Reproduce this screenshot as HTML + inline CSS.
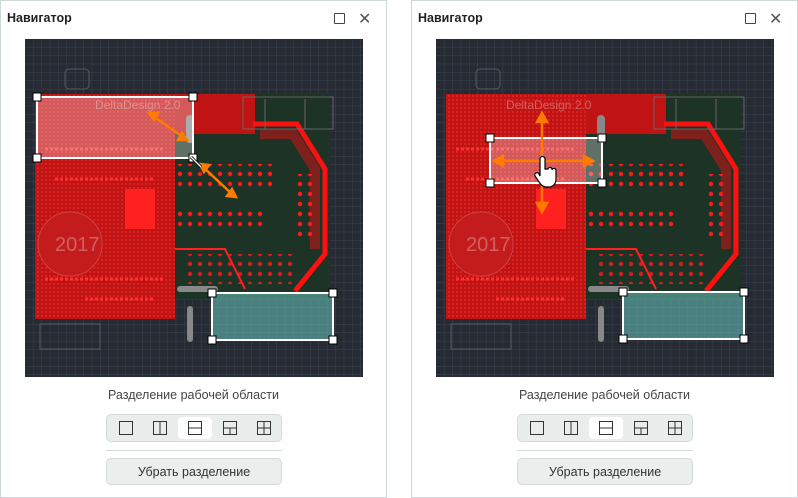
<!DOCTYPE html>
<html><head><meta charset="utf-8"><style>
*{box-sizing:border-box;margin:0;padding:0}
body{width:798px;height:498px;background:#fff;font-family:"Liberation Sans","DejaVu Sans",sans-serif;position:relative;overflow:hidden}
.p{position:absolute;top:0;width:387px;height:498px;border:1px solid #cfd8d8;background:#fff}
.t{position:absolute;left:6px;top:10px;font-size:12.5px;font-weight:bold;color:#222}
.sq{position:absolute;left:333px;top:12px;width:11px;height:11px;border:1.3px solid #444;border-radius:1px}
.x{position:absolute;left:357px;top:8px;font-size:16px;color:#555}
.cv{position:absolute;left:24px;top:38px;width:338px;height:338px}
.lb{position:absolute;left:0;width:100%;top:387px;text-align:center;font-size:12.5px;color:#444}
.seg{position:absolute;left:105px;top:413px;width:176px;height:28px;background:#e9edec;border:1px solid #d3dada;border-radius:5px}
.seg div{position:absolute;top:2px;width:34px;height:22px;border-radius:4px}
.ic{position:absolute;left:10px;top:4px;width:14px;height:14px;border:1.2px solid #333}
.hr{position:absolute;left:105px;top:449px;width:176px;height:1px;background:#d3d9d9}
.btn{position:absolute;left:105px;top:457px;width:176px;height:27px;background:#eceeed;border:1px solid #d3dada;border-radius:5px;text-align:center;line-height:26px;font-size:12.5px;color:#333}
</style></head><body>
<svg width="0" height="0" style="position:absolute">
<defs>
<pattern id="g" width="8.4" height="8.4" patternUnits="userSpaceOnUse"><path d="M8.4 0V8.4H0" fill="none" stroke="#3a4250" stroke-width="1"/></pattern>
<pattern id="d" width="10" height="10" patternUnits="userSpaceOnUse"><circle cx="5" cy="5" r="2.2" fill="#ff1a1a"/></pattern>
<pattern id="s" width="4" height="4" patternUnits="userSpaceOnUse"><rect width="2" height="2" fill="#ff3030"/></pattern>
<symbol id="b" viewBox="0 0 338 338">
<rect width="338" height="338" fill="#252a33"/>
<rect width="338" height="338" fill="url(#g)"/>
<rect x="40" y="30" width="24" height="20" rx="4" fill="none" stroke="#555c66"/>
<rect x="150" y="55" width="155" height="205" fill="#1d3326"/>
<path d="M10 55H230V95H150V280H10Z" fill="#c01414"/>
<rect x="10" y="55" width="140" height="225" fill="url(#s)" opacity=".45"/>
<path d="M228 85H272L300 130V215L270 252" fill="none" stroke="#ff1010" stroke-width="5"/>
<path d="M235 95H268L290 130V210" fill="none" stroke="#c01515" stroke-width="10" opacity=".6"/>
<rect x="150" y="125" width="100" height="25" fill="url(#d)"/>
<rect x="150" y="172" width="90" height="18" fill="url(#d)"/>
<rect x="270" y="135" width="20" height="65" fill="url(#d)"/>
<rect x="160" y="215" width="110" height="30" fill="url(#d)" opacity=".8"/>
<circle cx="45" cy="205" r="32" fill="#c41c1c" stroke="#d04040"/>
<text x="30" y="212" font-size="20" fill="#d06060" font-family="Liberation Sans">2017</text>
<text x="70" y="70" font-size="12" fill="#d06060" font-family="Liberation Sans">DeltaDesign 2.0</text>
<path d="M165 80V100" stroke="#888" stroke-width="8" stroke-linecap="round"/>
<path d="M240 60V90M280 60V90M218 60V90" stroke="#666" fill="none"/>
<rect x="218" y="58" width="90" height="32" fill="none" stroke="#666"/>
<path d="M20 110H140M30 140H130M20 240H140M60 260H130" stroke="#ff3030" stroke-width="3" stroke-dasharray="3 2"/>
<rect x="100" y="150" width="30" height="40" fill="#ff2020"/>
<rect x="15" y="285" width="60" height="25" fill="none" stroke="#555c66"/>
<path d="M155 250H190M165 270V300" stroke="#888" stroke-width="6" stroke-linecap="round"/>
<path d="M150 210H200L220 250" stroke="#ff2020" fill="none" stroke-width="2"/>
</symbol>
</defs></svg>

<div class="p" style="left:0">
<div class="t">Навигатор</div><div class="sq"></div><div class="x">✕</div>
<svg class="cv" viewBox="0 0 338 338">
<use href="#b" width="338" height="338"/>
<rect x="12" y="58" width="156" height="61" fill="#fff" fill-opacity=".3" stroke="#fff" stroke-width="2"/>
<rect x="187" y="254" width="121" height="47" fill="#6cc7c0" fill-opacity=".55" stroke="#fff" stroke-width="2"/>
<g fill="#fff" stroke="#000" stroke-width="1"><rect x="8" y="54" width="8" height="8"/><rect x="164" y="54" width="8" height="8"/><rect x="8" y="115" width="8" height="8"/><rect x="164" y="115" width="8" height="8"/>
<rect x="183" y="250" width="8" height="8"/><rect x="304" y="250" width="8" height="8"/><rect x="183" y="297" width="8" height="8"/><rect x="304" y="297" width="8" height="8"/></g>
<g stroke="#ff7a00" stroke-width="2.5" fill="#ff7a00"><path d="M128 77L158 98"/><path d="M124 74l9 0-4 7z"/><path d="M162 101l-9 0 4-7z"/><path d="M178 128L207 155"/><path d="M175 125l9 1-5 7z"/><path d="M211 158l-9-1 5-7z"/></g>
<path d="M166 118l10 10" stroke="#000" stroke-width="3"/><path d="M166 118l10 10" stroke="#fff" stroke-width="1.3"/>
</svg>
<div class="lb">Разделение рабочей области</div>
<div class="seg"><div style="left:2px"><span class="ic"></span></div><div style="left:36px"><span class="ic" style="background:linear-gradient(90deg,transparent 45%,#333 45%,#333 55%,transparent 55%)"></span></div><div style="left:71px;background:#fff"><span class="ic" style="background:linear-gradient(transparent 45%,#333 45%,#333 55%,transparent 55%)"></span></div><div style="left:106px"><span class="ic" style="background:linear-gradient(transparent 45%,#333 45%,#333 55%,transparent 55%),linear-gradient(90deg,transparent 45%,#333 45%,#333 55%,transparent 55%) bottom/100% 50% no-repeat"></span></div><div style="left:140px"><span class="ic" style="background:linear-gradient(transparent 45%,#333 45%,#333 55%,transparent 55%),linear-gradient(90deg,transparent 45%,#333 45%,#333 55%,transparent 55%)"></span></div></div>
<div class="hr"></div><div class="btn">Убрать разделение</div>
</div>

<div class="p" style="left:411px">
<div class="t">Навигатор</div><div class="sq"></div><div class="x">✕</div>
<svg class="cv" viewBox="0 0 338 338">
<use href="#b" width="338" height="338"/>
<rect x="54" y="99" width="112" height="45" fill="#fff" fill-opacity=".3" stroke="#fff" stroke-width="2"/>
<rect x="187" y="253" width="121" height="47" fill="#6cc7c0" fill-opacity=".55" stroke="#fff" stroke-width="2"/>
<g fill="#fff" stroke="#000" stroke-width="1"><rect x="50" y="95" width="8" height="8"/><rect x="162" y="95" width="8" height="8"/><rect x="50" y="140" width="8" height="8"/><rect x="162" y="140" width="8" height="8"/>
<rect x="183" y="249" width="8" height="8"/><rect x="304" y="249" width="8" height="8"/><rect x="183" y="296" width="8" height="8"/><rect x="304" y="296" width="8" height="8"/></g>
<g stroke="#ff7a00" stroke-width="2.5" fill="#ff7a00"><path d="M106 82V165M64 122H150"/><path d="M106 74l-5 9h10z"/><path d="M106 173l-5-9h10z"/><path d="M58 122l9-5v10z"/><path d="M157 122l-9-5v10z"/></g>
<path d="M104 137V120a2.5 2.5 0 0 1 5 0v10l3 0a2 2 0 0 1 4 1a2 2 0 0 1 4 1v8c0 5-3 8-8 8h-2c-3 0-5-2-7-5l-4-6a2 2 0 0 1 4-2z" fill="#fff" stroke="#000" stroke-width="1.2"/>
</svg>
<div class="lb">Разделение рабочей области</div>
<div class="seg"><div style="left:2px"><span class="ic"></span></div><div style="left:36px"><span class="ic" style="background:linear-gradient(90deg,transparent 45%,#333 45%,#333 55%,transparent 55%)"></span></div><div style="left:71px;background:#fff"><span class="ic" style="background:linear-gradient(transparent 45%,#333 45%,#333 55%,transparent 55%)"></span></div><div style="left:106px"><span class="ic" style="background:linear-gradient(transparent 45%,#333 45%,#333 55%,transparent 55%),linear-gradient(90deg,transparent 45%,#333 45%,#333 55%,transparent 55%) bottom/100% 50% no-repeat"></span></div><div style="left:140px"><span class="ic" style="background:linear-gradient(transparent 45%,#333 45%,#333 55%,transparent 55%),linear-gradient(90deg,transparent 45%,#333 45%,#333 55%,transparent 55%)"></span></div></div>
<div class="hr"></div><div class="btn">Убрать разделение</div>
</div>
</body></html>
